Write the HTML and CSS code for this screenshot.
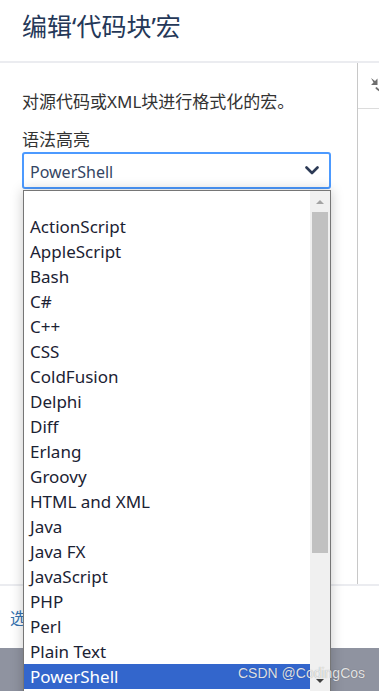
FILE: index.html
```html
<!DOCTYPE html>
<html lang="zh">
<head>
<meta charset="utf-8">
<link rel="stylesheet" href="styles.css">
</head>
<body>
<div class="modal">
  <header class="header"><h1 class="title">编辑‘代码块’宏</h1></header>
  <div class="content">
    <div class="main">
      <p class="desc">对源代码或XML块进行格式化的宏。</p>
      <label class="label">语法高亮</label>
      <div class="select">
        <span class="select-value">PowerShell</span>
        <svg class="chevron" width="14" height="9" viewBox="0 0 14 9"><path d="M1.5 1.5 L7 7 L12.5 1.5" fill="none" stroke="#2c3a55" stroke-width="2.6" stroke-linecap="round" stroke-linejoin="round"/></svg>
      </div>
    </div>
    <div class="side">
      <div class="side-tool">
        <svg class="undo" width="12" height="18" viewBox="0 0 12 18"><path d="M0 1 L4 4 L6.5 1.5 L6.5 8 L0 8 L2.5 5.5 Z" fill="#6e6e6e"/><path d="M5 10.5 C6 12 7.5 13 9 13.5" fill="none" stroke="#6e6e6e" stroke-width="2"/></svg>
      </div>
    </div>
  </div>
  <footer class="footer"><a class="link">选</a></footer>
</div>
<div class="backdrop"></div>

<div class="dropdown">
  <ul class="options">
    <li class="opt blank"></li>
    <li class="opt">ActionScript</li>
    <li class="opt">AppleScript</li>
    <li class="opt">Bash</li>
    <li class="opt">C#</li>
    <li class="opt">C++</li>
    <li class="opt">CSS</li>
    <li class="opt">ColdFusion</li>
    <li class="opt">Delphi</li>
    <li class="opt">Diff</li>
    <li class="opt">Erlang</li>
    <li class="opt">Groovy</li>
    <li class="opt">HTML and XML</li>
    <li class="opt">Java</li>
    <li class="opt">Java FX</li>
    <li class="opt">JavaScript</li>
    <li class="opt">PHP</li>
    <li class="opt">Perl</li>
    <li class="opt">Plain Text</li>
    <li class="opt selected">PowerShell</li>
  </ul>
  <div class="scrollbar">
    <div class="arrow up"></div>
    <div class="thumb"></div>
    <div class="arrow down"></div>
  </div>
</div>
<div class="watermark">CSDN @CodingCos</div>
</body>
</html>
```

FILE: styles.css
```css
* { box-sizing: border-box; }
html, body { margin: 0; padding: 0; }
body {
  width: 379px;
  height: 691px;
  overflow: hidden;
  background: #8f93a0;
  font-family: "Noto Sans", "Noto Sans CJK SC", sans-serif;
  position: relative;
}
.modal {
  height: 648px;
  background: #fff;
  display: flex;
  flex-direction: column;
}
.header {
  height: 63px;
  border-bottom: 2px solid #ebecf0;
  padding: 9px 0 0 22px;
}
.title {
  margin: 0;
  font-size: 25px;
  font-weight: 400;
  line-height: 34px;
  color: #253858;
}
.content {
  flex: 1;
  display: flex;
}
.main {
  flex: 1;
  padding: 27px 26px 0 22px;
}
.desc {
  margin: 0;
  font-size: 17px;
  line-height: 24px;
  color: #333;
}
.label {
  display: block;
  margin-top: 14px;
  font-size: 17px;
  line-height: 24px;
  color: #333;
}
.select {
  height: 37px;
  border: 2px solid #4c9aff;
  border-radius: 3px;
  display: flex;
  align-items: center;
  justify-content: space-between;
  padding: 3px 10px 0 6px;
}
.select-value {
  font-size: 16px;
  color: #344563;
}
.chevron { margin-top: -3px; }
.side {
  width: 22px;
  border-left: 1px solid #c8c8c8;
}
.side-tool {
  height: 46px;
  border-bottom: 1px solid #dcdcdc;
  padding: 14px 0 0 13px;
  overflow: hidden;
}
.undo { display: block; }
.footer {
  height: 64px;
  border-top: 2px solid #ebecf0;
  padding: 20px 0 0 10px;
}
.link {
  font-size: 16px;
  line-height: 24px;
  color: #3572b0;
}
.backdrop { height: 43px; }

.dropdown {
  position: absolute;
  left: 23px;
  top: 190px;
  width: 308px;
  height: 520px;
  background: #fff;
  border: 1px solid #767676;
  box-shadow: 0 0 12px rgba(0,0,0,0.22);
  display: flex;
}
.options {
  list-style: none;
  margin: 0;
  padding: 0;
  flex: 1;
}
.opt {
  height: 25px;
  line-height: 25px;
  padding-left: 6px;
  font-size: 17px;
  color: #1b2233;
  white-space: nowrap;
}
.opt.blank { height: 23px; }
.opt.selected {
  background: #3366cc;
  color: #fff;
}
.scrollbar {
  width: 20px;
  background: #f0f0f0;
  position: relative;
  height: 500px;
}
.thumb {
  position: absolute;
  left: 2px;
  right: 2px;
  top: 21px;
  height: 341px;
  background: #c1c1c1;
}
.arrow {
  position: absolute;
  left: 6px;
  width: 0;
  height: 0;
  border-left: 4px solid transparent;
  border-right: 4px solid transparent;
}
.arrow.up {
  top: 9px;
  border-bottom: 4px solid #a3a3a3;
}
.arrow.down {
  top: 488px;
  border-top: 4px solid #404040;
}
.watermark {
  position: absolute;
  left: 238px;
  top: 665px;
  font-family: "Liberation Sans", Arial, sans-serif;
  font-size: 14px;
  line-height: 17px;
  color: rgba(240,240,240,0.92);
  text-shadow: 0 0 1px rgba(0,0,0,0.35);
}
```
